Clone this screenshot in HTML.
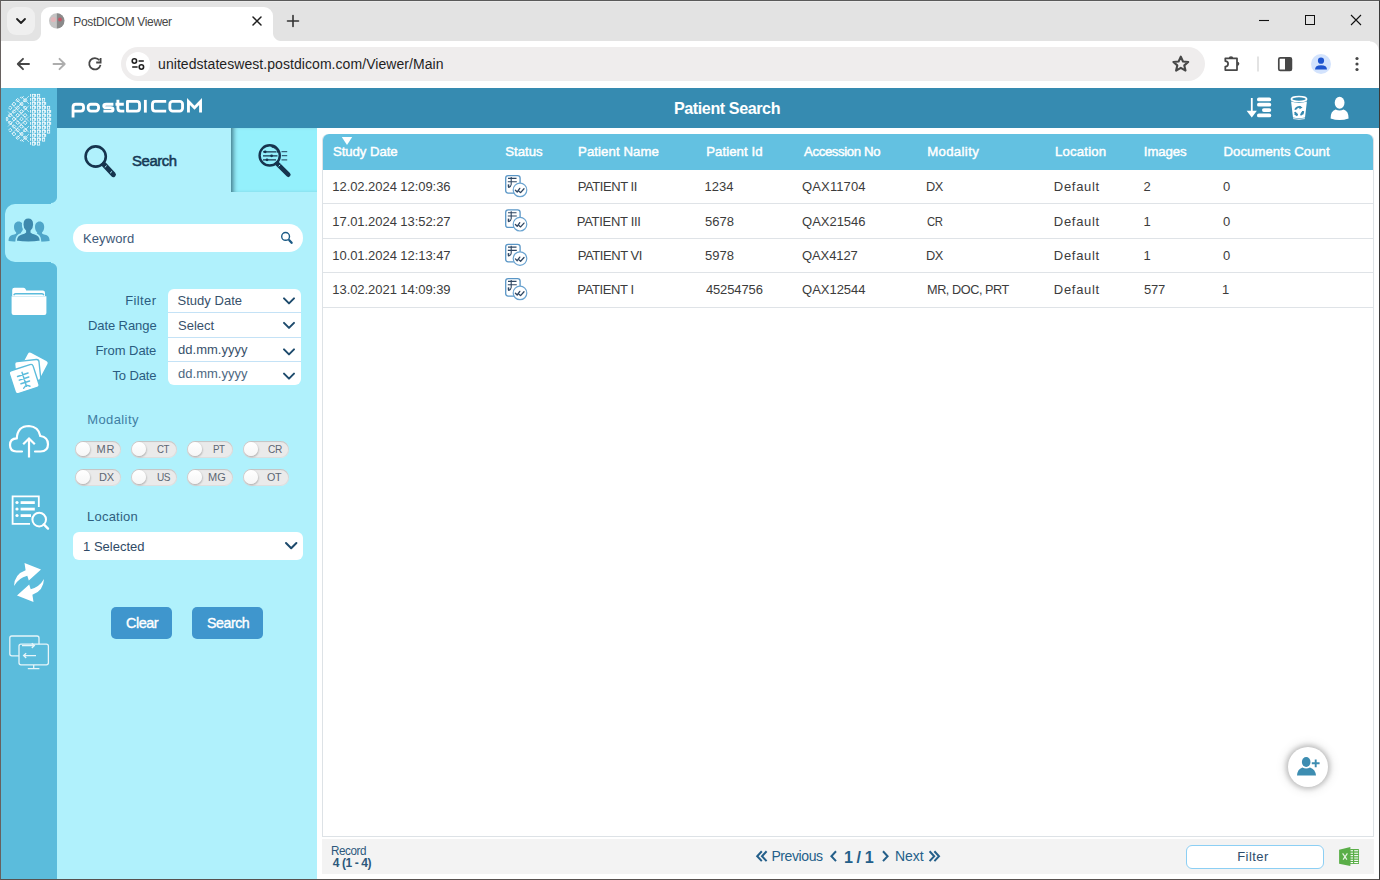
<!DOCTYPE html>
<html><head><meta charset="utf-8">
<title>PostDICOM Viewer</title>
<style>
*{box-sizing:border-box;margin:0;padding:0}
html,body{width:1380px;height:880px;overflow:hidden;background:#fff;font-family:"Liberation Sans",sans-serif}
body{position:relative}
.a{position:absolute}
.t{position:absolute;white-space:nowrap}
svg{position:absolute;overflow:visible}
</style></head><body>
<!-- ============ CHROME ============ -->
<div class="a" style="left:0;top:0;width:1380px;height:41px;background:#e3e3e3"></div>
<div class="a" style="left:7px;top:7px;width:28px;height:28px;border-radius:9px;background:#efefef"></div>
<!-- active tab with flares -->
<div class="a" style="left:41px;top:7px;width:232px;height:34px;background:#fff;border-radius:9px 9px 0 0"></div>
<div class="a" style="left:33px;top:33px;width:8px;height:8px;background:radial-gradient(circle at 0 0,#e3e3e3 7.5px,#fff 8.5px)"></div>
<div class="a" style="left:273px;top:33px;width:8px;height:8px;background:radial-gradient(circle at 100% 0,#e3e3e3 7.5px,#fff 8.5px)"></div>
<div class="a" style="left:0;top:41px;width:1380px;height:47px;background:#fff"></div>
<div class="a" style="left:1370px;top:41px;width:9px;height:9px;background:radial-gradient(circle at 0 100%,#fff 8px,#e3e3e3 9px)"></div>
<div class="a" style="left:121px;top:47px;width:1084px;height:34px;border-radius:17px;background:#efeded"></div>
<div class="a" style="left:126px;top:52px;width:24px;height:24px;border-radius:12px;background:#fff"></div>
<svg width="1380" height="88" style="left:0;top:0">
  <!-- tab search chevron -->
  <path d="M17 19 L21 23 L25 19" fill="none" stroke="#1f1f1f" stroke-width="1.8" stroke-linecap="round" stroke-linejoin="round"/>
  <!-- favicon -->
  <circle cx="56.6" cy="20.8" r="7.6" fill="#c4c4c4"/>
  <path d="M56.9 13.2 A7.6 7.6 0 0 1 56.9 28.4 Z" fill="#8a8a8a"/>
  <circle cx="53.3" cy="19.5" r="2.6" fill="#eab0b6" opacity=".75"/>
  <circle cx="60" cy="19.5" r="1.9" fill="#c85060" opacity=".9"/>
  <!-- tab close -->
  <path d="M253 17 L261 25 M261 17 L253 25" stroke="#1f1f1f" stroke-width="1.5" stroke-linecap="round"/>
  <!-- new tab plus -->
  <path d="M293 15.5 V26.5 M287.5 21 H298.5" stroke="#333" stroke-width="1.6" stroke-linecap="round"/>
  <!-- window controls -->
  <path d="M1259 20.5 H1269" stroke="#111" stroke-width="1.1"/>
  <rect x="1305.5" y="15.5" width="9" height="9" fill="none" stroke="#111" stroke-width="1"/>
  <path d="M1351 15 L1361 25 M1361 15 L1351 25" stroke="#111" stroke-width="1.1"/>
  <!-- back -->
  <path d="M29 64 H18 M23 58.8 L17.8 64 L23 69.2" fill="none" stroke="#474747" stroke-width="1.9" stroke-linecap="round" stroke-linejoin="round"/>
  <!-- forward -->
  <path d="M53.5 64 H64.5 M59.5 58.8 L64.7 64 L59.5 69.2" fill="none" stroke="#adadad" stroke-width="1.9" stroke-linecap="round" stroke-linejoin="round"/>
  <!-- reload -->
  <path d="M100.5 64.9 A5.7 5.7 0 1 1 99.4 60.2" fill="none" stroke="#474747" stroke-width="1.8"/>
  <path d="M96.2 62.5 H100.6 V58" fill="none" stroke="#474747" stroke-width="1.8"/>
  <!-- site info -->
  <circle cx="134.4" cy="61" r="2.2" fill="none" stroke="#1f1f1f" stroke-width="1.6"/>
  <path d="M138.6 61 H143.8 M132.2 67 H137.6" stroke="#1f1f1f" stroke-width="1.7"/>
  <circle cx="141.4" cy="67" r="2.2" fill="none" stroke="#1f1f1f" stroke-width="1.6"/>
  <!-- star -->
  <path d="M1180.8 56.7 L1183 61.5 L1188.2 62 L1184.3 65.4 L1185.5 70.6 L1180.8 67.9 L1176.1 70.6 L1177.3 65.4 L1173.4 62 L1178.6 61.5 Z" fill="none" stroke="#474747" stroke-width="2.1" stroke-linejoin="round"/>
  <!-- extensions -->
  <path d="M1225.3 58.3 H1237 V70 H1225.3 V66.6 A2.8 2.8 0 0 0 1225.3 61 Z" fill="none" stroke="#474747" stroke-width="1.75" stroke-linejoin="round"/>
  <path d="M1228.7 58.6 A2.3 2.3 0 0 1 1233.3 58.6 Z" fill="#474747"/>
  <path d="M1237.2 61.7 A2.15 2.15 0 0 1 1237.2 66 Z" fill="#474747"/>
  <path d="M1258 56.5 V71.5" stroke="#c7c7c7" stroke-width="1"/>
  <!-- side panel -->
  <rect x="1278.8" y="57.8" width="12.6" height="12.6" rx="1.5" fill="none" stroke="#474747" stroke-width="1.7"/>
  <rect x="1285" y="57.8" width="6.4" height="12.6" fill="#474747"/>
  <!-- profile -->
  <circle cx="1321" cy="64" r="10" fill="#d3e3fd"/>
  <circle cx="1321" cy="60.7" r="3.1" fill="#1f55cf"/>
  <path d="M1315 69.5 Q1315 65.2 1321 65.2 Q1327 65.2 1327 69.5 Z" fill="#1f55cf"/>
  <!-- menu -->
  <circle cx="1357" cy="58.5" r="1.6" fill="#474747"/>
  <circle cx="1357" cy="64" r="1.6" fill="#474747"/>
  <circle cx="1357" cy="69.5" r="1.6" fill="#474747"/>
</svg>

<!-- ============ APP ============ -->
<div class="a" style="left:0;top:88px;width:57px;height:792px;background:#5bbcdc"></div>
<div class="a" style="left:57px;top:88px;width:1323px;height:40px;background:#368bb1"></div>
<div class="a" style="left:57px;top:128px;width:260px;height:752px;background:#b0f1fc"></div>
<!-- active sidebar item -->
<div class="a" style="left:5px;top:204px;width:52px;height:58px;background:#b0f1fc;border-radius:10px 0 0 10px"></div>
<div class="a" style="left:51px;top:197px;width:6px;height:7px;background:radial-gradient(circle at 0 0,#5bbcdc 5.5px,#b0f1fc 6.5px)"></div>
<div class="a" style="left:51px;top:262px;width:6px;height:7px;background:radial-gradient(circle at 0 100%,#5bbcdc 5.5px,#b0f1fc 6.5px)"></div>
<!-- filter tab -->
<div class="a" style="left:231px;top:128px;width:86px;height:64px;background:#94f0fc;box-shadow:inset 5px 0 5px -3px rgba(0,30,50,.6)"></div>
<!-- main white -->
<div class="a" style="left:317px;top:128px;width:1063px;height:752px;background:#fff"></div>
<!-- table -->
<div class="a" style="left:322px;top:134px;width:1052px;height:703px;border:1px solid #dde2e6;border-top:none;border-radius:6px 6px 0 0"></div>
<div class="a" style="left:323px;top:134px;width:1050px;height:36px;background:#63c1e1;border-radius:6px 6px 0 0"></div>
<div class="a" style="left:323px;top:203px;width:1050px;height:1px;background:#dfe3e7"></div>
<div class="a" style="left:323px;top:238px;width:1050px;height:1px;background:#dfe3e7"></div>
<div class="a" style="left:323px;top:272px;width:1050px;height:1px;background:#dfe3e7"></div>
<div class="a" style="left:323px;top:307px;width:1050px;height:1px;background:#dfe3e7"></div>
<!-- footer -->
<div class="a" style="left:322px;top:839px;width:1052px;height:35px;background:#f3f3f3"></div>

<!-- brain logo -->
<svg width="57" height="56" style="left:0;top:88px">
 <defs><clipPath id="bcl2"><ellipse cx="29" cy="31" rx="23.2" ry="24"/></clipPath></defs>
 <g transform="translate(0,-88)">
 <g clip-path="url(#bcl2)" transform="translate(0,88)"><g transform="translate(0,-88)">
  <path d="M6 119 L29 96 M6 119 L29 142 M8 111.5 L29 132.5 M8 126.5 L29 105.5 M11.5 104 L29 121.5 M11.5 134 L29 116.5 M16 99 L29 112 M16 139 L29 126 M21.5 96.5 L29 104 M21.5 141.5 L29 134" stroke="#fff" stroke-width="0.7" opacity=".85"/>
  <rect x="5.2" y="117.7" width="2.6" height="2.6" transform="rotate(45 6.5 119.0)" fill="none" stroke="#fff" stroke-width="0.8"/>
<rect x="8.9" y="106.5" width="2.6" height="2.6" transform="rotate(45 10.2 107.8)" fill="none" stroke="#fff" stroke-width="0.8"/>
<rect x="8.9" y="114.0" width="2.6" height="2.6" transform="rotate(45 10.2 115.2)" fill="none" stroke="#fff" stroke-width="0.8"/>
<rect x="8.9" y="121.5" width="2.6" height="2.6" transform="rotate(45 10.2 122.8)" fill="none" stroke="#fff" stroke-width="0.8"/>
<rect x="8.9" y="128.9" width="2.6" height="2.6" transform="rotate(45 10.2 130.2)" fill="none" stroke="#fff" stroke-width="0.8"/>
<rect x="12.7" y="102.7" width="2.6" height="2.6" transform="rotate(45 14.0 104.0)" fill="none" stroke="#fff" stroke-width="0.8"/>
<rect x="12.7" y="110.2" width="2.6" height="2.6" transform="rotate(45 14.0 111.5)" fill="none" stroke="#fff" stroke-width="0.8"/>
<rect x="12.7" y="117.7" width="2.6" height="2.6" transform="rotate(45 14.0 119.0)" fill="none" stroke="#fff" stroke-width="0.8"/>
<rect x="12.7" y="125.2" width="2.6" height="2.6" transform="rotate(45 14.0 126.5)" fill="none" stroke="#fff" stroke-width="0.8"/>
<rect x="12.7" y="132.7" width="2.6" height="2.6" transform="rotate(45 14.0 134.0)" fill="none" stroke="#fff" stroke-width="0.8"/>
<rect x="16.4" y="99.0" width="2.6" height="2.6" transform="rotate(45 17.8 100.2)" fill="none" stroke="#fff" stroke-width="0.8"/>
<rect x="16.4" y="106.5" width="2.6" height="2.6" transform="rotate(45 17.8 107.8)" fill="none" stroke="#fff" stroke-width="0.8"/>
<rect x="16.4" y="114.0" width="2.6" height="2.6" transform="rotate(45 17.8 115.2)" fill="none" stroke="#fff" stroke-width="0.8"/>
<rect x="16.4" y="121.5" width="2.6" height="2.6" transform="rotate(45 17.8 122.8)" fill="none" stroke="#fff" stroke-width="0.8"/>
<rect x="16.4" y="128.9" width="2.6" height="2.6" transform="rotate(45 17.8 130.2)" fill="none" stroke="#fff" stroke-width="0.8"/>
<rect x="16.4" y="136.4" width="2.6" height="2.6" transform="rotate(45 17.8 137.8)" fill="none" stroke="#fff" stroke-width="0.8"/>
<rect x="20.2" y="95.2" width="2.6" height="2.6" transform="rotate(45 21.5 96.5)" fill="none" stroke="#fff" stroke-width="0.8"/>
<rect x="20.2" y="102.7" width="2.6" height="2.6" transform="rotate(45 21.5 104.0)" fill="none" stroke="#fff" stroke-width="0.8"/>
<rect x="20.2" y="110.2" width="2.6" height="2.6" transform="rotate(45 21.5 111.5)" fill="none" stroke="#fff" stroke-width="0.8"/>
<rect x="20.2" y="117.7" width="2.6" height="2.6" transform="rotate(45 21.5 119.0)" fill="none" stroke="#fff" stroke-width="0.8"/>
<rect x="20.2" y="125.2" width="2.6" height="2.6" transform="rotate(45 21.5 126.5)" fill="none" stroke="#fff" stroke-width="0.8"/>
<rect x="20.2" y="132.7" width="2.6" height="2.6" transform="rotate(45 21.5 134.0)" fill="none" stroke="#fff" stroke-width="0.8"/>
<rect x="20.2" y="140.2" width="2.6" height="2.6" transform="rotate(45 21.5 141.5)" fill="none" stroke="#fff" stroke-width="0.8"/>
<rect x="23.9" y="99.0" width="2.6" height="2.6" transform="rotate(45 25.2 100.2)" fill="none" stroke="#fff" stroke-width="0.8"/>
<rect x="23.9" y="106.5" width="2.6" height="2.6" transform="rotate(45 25.2 107.8)" fill="none" stroke="#fff" stroke-width="0.8"/>
<rect x="23.9" y="114.0" width="2.6" height="2.6" transform="rotate(45 25.2 115.2)" fill="none" stroke="#fff" stroke-width="0.8"/>
<rect x="23.9" y="121.5" width="2.6" height="2.6" transform="rotate(45 25.2 122.8)" fill="none" stroke="#fff" stroke-width="0.8"/>
<rect x="23.9" y="128.9" width="2.6" height="2.6" transform="rotate(45 25.2 130.2)" fill="none" stroke="#fff" stroke-width="0.8"/>
<rect x="23.9" y="136.4" width="2.6" height="2.6" transform="rotate(45 25.2 137.8)" fill="none" stroke="#fff" stroke-width="0.8"/>
 </g></g>
 <g fill="#fff">
 <rect x="30.2" y="94.0" width="0.9" height="2.8"/>
<rect x="32.5" y="94.3" width="2.2" height="2.8" fill="none" stroke="#fff" stroke-width="0.75"/>
<rect x="35.2" y="94.0" width="0.9" height="2.8"/>
<rect x="37.5" y="94.3" width="2.2" height="2.8" fill="none" stroke="#fff" stroke-width="0.75"/>
<rect x="30.2" y="98.0" width="0.9" height="2.8"/>
<rect x="32.5" y="98.3" width="2.2" height="2.8" fill="none" stroke="#fff" stroke-width="0.75"/>
<rect x="35.2" y="98.0" width="0.9" height="2.8"/>
<rect x="37.5" y="98.3" width="2.2" height="2.8" fill="none" stroke="#fff" stroke-width="0.75"/>
<rect x="40.2" y="98.0" width="0.9" height="2.8"/>
<rect x="42.5" y="98.3" width="2.2" height="2.8" fill="none" stroke="#fff" stroke-width="0.75"/>
<rect x="30.2" y="102.0" width="0.9" height="2.8"/>
<rect x="32.5" y="102.3" width="2.2" height="2.8" fill="none" stroke="#fff" stroke-width="0.75"/>
<rect x="35.2" y="102.0" width="0.9" height="2.8"/>
<rect x="37.5" y="102.3" width="2.2" height="2.8" fill="none" stroke="#fff" stroke-width="0.75"/>
<rect x="40.2" y="102.0" width="0.9" height="2.8"/>
<rect x="42.5" y="102.3" width="2.2" height="2.8" fill="none" stroke="#fff" stroke-width="0.75"/>
<rect x="45.2" y="102.0" width="0.9" height="2.8"/>
<rect x="30.2" y="106.0" width="0.9" height="2.8"/>
<rect x="32.5" y="106.3" width="2.2" height="2.8" fill="none" stroke="#fff" stroke-width="0.75"/>
<rect x="35.2" y="106.0" width="0.9" height="2.8"/>
<rect x="37.5" y="106.3" width="2.2" height="2.8" fill="none" stroke="#fff" stroke-width="0.75"/>
<rect x="40.2" y="106.0" width="0.9" height="2.8"/>
<rect x="42.5" y="106.3" width="2.2" height="2.8" fill="none" stroke="#fff" stroke-width="0.75"/>
<rect x="45.2" y="106.0" width="0.9" height="2.8"/>
<rect x="47.5" y="106.3" width="2.2" height="2.8" fill="none" stroke="#fff" stroke-width="0.75"/>
<rect x="30.2" y="110.0" width="0.9" height="2.8"/>
<rect x="32.5" y="110.3" width="2.2" height="2.8" fill="none" stroke="#fff" stroke-width="0.75"/>
<rect x="35.2" y="110.0" width="0.9" height="2.8"/>
<rect x="37.5" y="110.3" width="2.2" height="2.8" fill="none" stroke="#fff" stroke-width="0.75"/>
<rect x="40.2" y="110.0" width="0.9" height="2.8"/>
<rect x="42.5" y="110.3" width="2.2" height="2.8" fill="none" stroke="#fff" stroke-width="0.75"/>
<rect x="45.2" y="110.0" width="0.9" height="2.8"/>
<rect x="47.5" y="110.3" width="2.2" height="2.8" fill="none" stroke="#fff" stroke-width="0.75"/>
<rect x="50.2" y="110.0" width="0.9" height="2.8"/>
<rect x="30.2" y="114.0" width="0.9" height="2.8"/>
<rect x="32.5" y="114.3" width="2.2" height="2.8" fill="none" stroke="#fff" stroke-width="0.75"/>
<rect x="35.2" y="114.0" width="0.9" height="2.8"/>
<rect x="37.5" y="114.3" width="2.2" height="2.8" fill="none" stroke="#fff" stroke-width="0.75"/>
<rect x="40.2" y="114.0" width="0.9" height="2.8"/>
<rect x="42.5" y="114.3" width="2.2" height="2.8" fill="none" stroke="#fff" stroke-width="0.75"/>
<rect x="45.2" y="114.0" width="0.9" height="2.8"/>
<rect x="47.5" y="114.3" width="2.2" height="2.8" fill="none" stroke="#fff" stroke-width="0.75"/>
<rect x="50.2" y="114.0" width="0.9" height="2.8"/>
<rect x="30.2" y="118.0" width="0.9" height="2.8"/>
<rect x="32.5" y="118.3" width="2.2" height="2.8" fill="none" stroke="#fff" stroke-width="0.75"/>
<rect x="35.2" y="118.0" width="0.9" height="2.8"/>
<rect x="37.5" y="118.3" width="2.2" height="2.8" fill="none" stroke="#fff" stroke-width="0.75"/>
<rect x="40.2" y="118.0" width="0.9" height="2.8"/>
<rect x="42.5" y="118.3" width="2.2" height="2.8" fill="none" stroke="#fff" stroke-width="0.75"/>
<rect x="45.2" y="118.0" width="0.9" height="2.8"/>
<rect x="47.5" y="118.3" width="2.2" height="2.8" fill="none" stroke="#fff" stroke-width="0.75"/>
<rect x="50.2" y="118.0" width="0.9" height="2.8"/>
<rect x="30.2" y="122.0" width="0.9" height="2.8"/>
<rect x="32.5" y="122.3" width="2.2" height="2.8" fill="none" stroke="#fff" stroke-width="0.75"/>
<rect x="35.2" y="122.0" width="0.9" height="2.8"/>
<rect x="37.5" y="122.3" width="2.2" height="2.8" fill="none" stroke="#fff" stroke-width="0.75"/>
<rect x="40.2" y="122.0" width="0.9" height="2.8"/>
<rect x="42.5" y="122.3" width="2.2" height="2.8" fill="none" stroke="#fff" stroke-width="0.75"/>
<rect x="45.2" y="122.0" width="0.9" height="2.8"/>
<rect x="47.5" y="122.3" width="2.2" height="2.8" fill="none" stroke="#fff" stroke-width="0.75"/>
<rect x="50.2" y="122.0" width="0.9" height="2.8"/>
<rect x="30.2" y="126.0" width="0.9" height="2.8"/>
<rect x="32.5" y="126.3" width="2.2" height="2.8" fill="none" stroke="#fff" stroke-width="0.75"/>
<rect x="35.2" y="126.0" width="0.9" height="2.8"/>
<rect x="37.5" y="126.3" width="2.2" height="2.8" fill="none" stroke="#fff" stroke-width="0.75"/>
<rect x="40.2" y="126.0" width="0.9" height="2.8"/>
<rect x="42.5" y="126.3" width="2.2" height="2.8" fill="none" stroke="#fff" stroke-width="0.75"/>
<rect x="45.2" y="126.0" width="0.9" height="2.8"/>
<rect x="47.5" y="126.3" width="2.2" height="2.8" fill="none" stroke="#fff" stroke-width="0.75"/>
<rect x="30.2" y="130.0" width="0.9" height="2.8"/>
<rect x="32.5" y="130.3" width="2.2" height="2.8" fill="none" stroke="#fff" stroke-width="0.75"/>
<rect x="35.2" y="130.0" width="0.9" height="2.8"/>
<rect x="37.5" y="130.3" width="2.2" height="2.8" fill="none" stroke="#fff" stroke-width="0.75"/>
<rect x="40.2" y="130.0" width="0.9" height="2.8"/>
<rect x="42.5" y="130.3" width="2.2" height="2.8" fill="none" stroke="#fff" stroke-width="0.75"/>
<rect x="45.2" y="130.0" width="0.9" height="2.8"/>
<rect x="47.5" y="130.3" width="2.2" height="2.8" fill="none" stroke="#fff" stroke-width="0.75"/>
<rect x="30.2" y="134.0" width="0.9" height="2.8"/>
<rect x="32.5" y="134.3" width="2.2" height="2.8" fill="none" stroke="#fff" stroke-width="0.75"/>
<rect x="35.2" y="134.0" width="0.9" height="2.8"/>
<rect x="37.5" y="134.3" width="2.2" height="2.8" fill="none" stroke="#fff" stroke-width="0.75"/>
<rect x="40.2" y="134.0" width="0.9" height="2.8"/>
<rect x="42.5" y="134.3" width="2.2" height="2.8" fill="none" stroke="#fff" stroke-width="0.75"/>
<rect x="45.2" y="134.0" width="0.9" height="2.8"/>
<rect x="30.2" y="138.0" width="0.9" height="2.8"/>
<rect x="32.5" y="138.3" width="2.2" height="2.8" fill="none" stroke="#fff" stroke-width="0.75"/>
<rect x="35.2" y="138.0" width="0.9" height="2.8"/>
<rect x="37.5" y="138.3" width="2.2" height="2.8" fill="none" stroke="#fff" stroke-width="0.75"/>
<rect x="40.2" y="138.0" width="0.9" height="2.8"/>
<rect x="42.5" y="138.3" width="2.2" height="2.8" fill="none" stroke="#fff" stroke-width="0.75"/>
<rect x="30.2" y="142.0" width="0.9" height="2.8"/>
<rect x="32.5" y="142.3" width="2.2" height="2.8" fill="none" stroke="#fff" stroke-width="0.75"/>
<rect x="35.2" y="142.0" width="0.9" height="2.8"/>
<rect x="37.5" y="142.3" width="2.2" height="2.8" fill="none" stroke="#fff" stroke-width="0.75"/>
 </g>
 </g>
</svg>
<!-- postDICOM logo -->
<svg width="140" height="24" style="left:68px;top:96px">
 <g transform="translate(-68,-96)" fill="none" stroke="#fff" stroke-width="2.85" stroke-linejoin="round">
  <path d="M73.05 117.4 V107 Q73.05 104.2 75.85 104.2 H80.75 Q83.55 104.2 83.55 107 V108.35 Q83.55 111.15 80.75 111.15 H73.05"/>
  <rect x="88.15" y="104.2" width="10.4" height="6.95" rx="2.8"/>
  <path d="M113.4 104.2 H106.2 Q103.75 104.2 103.75 105.95 Q103.75 107.65 106.2 107.65 H110.6 Q113.05 107.65 113.05 109.4 Q113.05 111.15 110.6 111.15 H103.4"/>
  <path d="M117.9 99.8 V108.35 Q117.9 111.15 120.7 111.15 H124.3 M115.5 104.2 H123.8"/>
  <path d="M127.45 101.35 V111.15 H136.75 Q139.55 111.15 139.55 108.35 V104.15 Q139.55 101.35 136.75 101.35 Z"/>
  <path d="M145.35 99.9 V112.6"/>
  <path d="M166.2 101.35 H155.25 Q152.45 101.35 152.45 104.15 V108.35 Q152.45 111.15 155.25 111.15 H166.2"/>
  <rect x="169.85" y="101.35" width="12.7" height="9.8" rx="2.8"/>
  <path d="M188.45 112.6 V101.6 L194.5 107.8 L200.55 101.6 V112.6" stroke-linejoin="miter"/>
 </g>
</svg>
<!-- header icons -->
<svg width="130" height="40" style="left:1236px;top:88px">
 <g transform="translate(-1236,-88)" fill="#fff">
  <rect x="1250.9" y="98" width="1.8" height="15"/>
  <path d="M1246.6 110.8 H1256.9 L1251.8 117.4 Z"/>
  <rect x="1257" y="97.6" width="14.2" height="3.7" rx="1.85"/>
  <rect x="1257" y="102.8" width="14.2" height="3.7" rx="1.85"/>
  <rect x="1262" y="108.2" width="9.2" height="3.7" rx="1.85"/>
  <rect x="1257" y="113.6" width="14.2" height="3.7" rx="1.85"/>
  <path d="M1291.1 101.6 Q1299 104.4 1306.9 101.6 L1305 117.6 Q1299 119 1293 117.6 Z" fill="#fff"/>
  <ellipse cx="1299" cy="99" rx="7.6" ry="2.5" fill="#368bb1" stroke="#fff" stroke-width="1.7"/>
  <path d="M1293.2 118.6 Q1299 120 1304.8 118.6" fill="none" stroke="#fff" stroke-width="0.9"/>
  <g fill="none" stroke="#368bb1" stroke-width="1.9">
   <path d="M1295.2 109.8 A4.1 4.1 0 0 1 1300.8 107.3"/>
   <path d="M1303 111 A4.1 4.1 0 0 1 1300.4 114.9"/>
   <path d="M1297.8 115 A4.1 4.1 0 0 1 1295 112"/>
  </g>
  <path d="M1299.4 105.8 L1302.6 107.6 L1299.4 109.2 Z M1304.2 111.2 L1303.2 114.8 L1301 112.2 Z M1296.8 116.2 L1293.8 114 L1297.2 112.8 Z" fill="#368bb1"/>
  <ellipse cx="1339.6" cy="102.8" rx="4.9" ry="6"/>
  <path d="M1330.6 118.6 Q1330.4 111 1335.6 109.4 Q1339.6 111.6 1343.6 109.4 Q1348.8 111 1348.6 118.6 Q1339.6 121.6 1330.6 118.6 Z"/>
 </g>
</svg>
<!-- search tab icon -->
<svg width="60" height="50" style="left:80px;top:140px">
 <g transform="translate(-80,-140)">
  <circle cx="95.7" cy="156.5" r="10.1" fill="none" stroke="#16344e" stroke-width="2.6"/>
  <path d="M104 164.5 L113.3 174.6" stroke="#16344e" stroke-width="5.2" stroke-linecap="round"/>
  <path d="M104.8 167.4 L106.7 165.6 M110.1 173.2 L112.1 171.3" stroke="#b0f1fc" stroke-width="1"/>
 </g>
</svg>
<!-- filter tab icon -->
<svg width="40" height="40" style="left:255px;top:140px">
 <g transform="translate(-255,-140)">
  <circle cx="269.7" cy="155.4" r="10.1" fill="none" stroke="#16344e" stroke-width="2.4"/>
  <path d="M277.2 163.6 L288.3 174.7" stroke="#16344e" stroke-width="4.6" stroke-linecap="round"/>
  <path d="M278.6 166.4 L280.2 164.8" stroke="#94f0fc" stroke-width="1"/>
  <path d="M263 151.8 H276.5 M263 155.8 H277.5 M263 159.8 H276" stroke="#16344e" stroke-width="1.2"/>
  <circle cx="265.2" cy="151.8" r="1.4" fill="#16344e"/><circle cx="271.6" cy="155.8" r="1.4" fill="#16344e"/><circle cx="267" cy="159.8" r="1.4" fill="#16344e"/>
  <path d="M271.5 147 Q277 148 278 153" fill="none" stroke="#16344e" stroke-width="1"/>
  <path d="M281.5 151.6 H287.2 M281.8 155.7 H287.2 M281.5 159.8 H287.2" stroke="#16344e" stroke-width="1.3" opacity=".75"/>
 </g>
</svg>
<!-- sidebar icons -->
<svg width="57" height="470" style="left:0;top:200px">
 <g transform="translate(0,-200)">
  <!-- people -->
  <defs>
   <path id="person" d="M0 -13.4 C3.6 -13.4 5.6 -10.6 5.6 -6.8 C5.6 -3.6 4.4 -1.6 3 -0.4 L3 1 C3.8 1.8 5 2.2 6.6 2.6 C10.6 3.6 12.2 5.4 12.2 10.2 Q0 12 -12.2 10.2 C-12.2 5.4 -10.6 3.6 -6.6 2.6 C-5 2.2 -3.8 1.8 -3 1 L-3 -0.4 C-4.4 -1.6 -5.6 -3.6 -5.6 -6.8 C-5.6 -10.6 -3.6 -13.4 0 -13.4 Z"/>
  </defs>
  <use href="#person" transform="translate(18.6 232.6) scale(0.82)" fill="#4fa6c9"/>
  <use href="#person" transform="translate(39.6 232.6) scale(0.82)" fill="#4fa6c9"/>
  <use href="#person" transform="translate(28.3 231.2)" fill="#3d89ad" stroke="#b0f1fc" stroke-width="1.6"/>
  <!-- folder -->
  <g fill="#fff">
   <path d="M12.2 290 Q12.2 287.8 14.4 287.8 H23.5 Q25.2 287.8 25.8 289.6 L26.2 290.6 H42.8 Q45 290.6 45 292.8 V296 H12.2 Z"/>
   <path d="M11.6 296.2 H46.4 V313 Q46.4 315 44.4 315 H13.6 Q11.6 315 11.6 313 Z"/>
  </g>
  <path d="M13.8 295.2 Q14.2 293.8 15.6 293.8 H42 Q43.4 293.8 43.8 295.2" fill="none" stroke="#5bbcdc" stroke-width="1.4"/>
  <!-- xray cards -->
  <g transform="rotate(28 34 368)"><rect x="22" y="356" width="22" height="21" rx="2.5" fill="#fff"/></g>
  <g transform="rotate(-6 28 372)"><rect x="15.5" y="360.5" width="24.5" height="21" rx="2.5" fill="#fff" stroke="#5bbcdc" stroke-width="1.4"/></g>
  <g transform="rotate(-18 24.5 380)">
   <rect x="12" y="367" width="25" height="24" rx="2.5" fill="#fff" stroke="#5bbcdc" stroke-width="1.4"/>
   <path d="M24.5 372 V386.5 M19 374.5 H30 M19.5 378.5 H29.5 M20 382.5 H29 M21.2 387.6 Q24.5 384.5 27.8 387.6" fill="none" stroke="#5bbcdc" stroke-width="1.5" stroke-linecap="round"/>
  </g>
  <!-- cloud upload -->
  <path d="M22 451.5 H16.5 Q10 451.5 10 445 Q10 438.5 16.8 438.3 Q17.5 426 29 426 Q38.5 426.5 40.3 436 Q48 437 48 444.3 Q48 451.5 40.5 451.5 H35" fill="none" stroke="#fff" stroke-width="2.2" stroke-linecap="round"/>
  <path d="M29 457.5 V438.5 M23.2 444.3 L29 438.5 L34.8 444.3" fill="none" stroke="#fff" stroke-width="2.2"/>
  <!-- list search -->
  <path d="M30 523.8 H12.6 V496.4 H38.8 V507" fill="none" stroke="#fff" stroke-width="1.8"/>
  <g fill="#fff"><circle cx="17" cy="502.5" r="1.6"/><circle cx="17" cy="509" r="1.6"/><circle cx="17" cy="515.5" r="1.6"/>
   <rect x="20.6" y="501.2" width="14.2" height="2.8"/><rect x="20.6" y="507.7" width="14.2" height="2.8"/><rect x="20.6" y="514.2" width="10.4" height="2.8"/></g>
  <circle cx="39.2" cy="519.6" r="6.8" fill="#5bbcdc" stroke="#fff" stroke-width="2"/>
  <path d="M43.8 524.4 L48 528.6" stroke="#fff" stroke-width="2.4" stroke-linecap="round"/>
  <!-- sync -->
  <g fill="#fff">
   <path d="M14 586 Q14.5 574 25.6 570.2 L24.5 563 L41 569.6 L28.8 580.6 L27.3 575.8 Q18.5 578 14 586 Z"/>
   <path d="M44 579 Q43.5 591 32.4 594.8 L33.5 602 L17 595.4 L29.2 584.4 L30.7 589.2 Q39.5 587 44 579 Z"/>
  </g>
  <!-- monitors -->
  <g fill="none" stroke="#fff" stroke-width="1.3" opacity=".85">
   <rect x="9.8" y="636" width="29.2" height="19.8" rx="2"/>
   <rect x="19" y="644.2" width="29.4" height="20.6" rx="2" fill="#5bbcdc"/>
   <path d="M33.7 665 V668.3 M27.8 668.6 H39.4"/>
   <path d="M22 645.6 H34.4 M31.8 643.2 L34.4 645.6 L31.8 648" />
   <path d="M36 655.6 H23.6 M26.2 653.2 L23.6 655.6 L26.2 658"/>
  </g>
 </g>
</svg>
<!-- keyword input -->
<div class="a" style="left:73px;top:224px;width:230px;height:28px;border-radius:14px;background:#fff"></div>
<svg width="20" height="20" style="left:278px;top:228px">
 <g transform="translate(-278,-228)">
  <circle cx="285.6" cy="236.4" r="3.9" fill="none" stroke="#1b5a85" stroke-width="1.4"/>
  <path d="M289.3 240.3 L291.6 242.8" stroke="#1b5a85" stroke-width="2.3" stroke-linecap="round"/>
 </g>
</svg>
<!-- selects group -->
<div class="a" style="left:168px;top:289px;width:133px;height:96px;border-radius:6px;background:#fff"></div>
<div class="a" style="left:168px;top:312px;width:133px;height:1px;background:#c4e2f6"></div>
<div class="a" style="left:168px;top:337px;width:133px;height:1px;background:#c4e2f6"></div>
<div class="a" style="left:168px;top:361px;width:133px;height:1px;background:#c4e2f6"></div>
<svg width="20" height="100" style="left:280px;top:290px">
 <g transform="translate(-280,-290)" fill="none" stroke="#1d4a6c" stroke-width="2" stroke-linecap="round" stroke-linejoin="round">
  <path d="M284 298.4 L289 303.4 L294 298.4"/>
  <path d="M284 322.9 L289 327.9 L294 322.9"/>
  <path d="M284 349.4 L289 354.4 L294 349.4"/>
  <path d="M284 373.6 L289 378.6 L294 373.6"/>
  <path d="M286 543 L291.2 548.2 L296.4 543"/>
 </g>
</svg>
<!-- location select -->
<div class="a" style="left:73px;top:532px;width:230px;height:28px;border-radius:6px;background:#fff"></div>
<svg width="20" height="20" style="left:280px;top:536px">
 <g transform="translate(-280,-536)" fill="none" stroke="#1d4a6c" stroke-width="2" stroke-linecap="round" stroke-linejoin="round">
  <path d="M286 543 L291.2 548.2 L296.4 543"/>
 </g>
</svg>
<!-- toggles -->
<div class="a" style="left:75px;top:441px;width:46px;height:17px;border-radius:9px;background:#eaeaea;box-shadow:inset 0 1px 1px rgba(0,0,0,.12), inset 0 0 0 1px #dedede"></div>
<div class="a" style="left:131px;top:441px;width:46px;height:17px;border-radius:9px;background:#eaeaea;box-shadow:inset 0 1px 1px rgba(0,0,0,.12), inset 0 0 0 1px #dedede"></div>
<div class="a" style="left:187px;top:441px;width:46px;height:17px;border-radius:9px;background:#eaeaea;box-shadow:inset 0 1px 1px rgba(0,0,0,.12), inset 0 0 0 1px #dedede"></div>
<div class="a" style="left:243px;top:441px;width:46px;height:17px;border-radius:9px;background:#eaeaea;box-shadow:inset 0 1px 1px rgba(0,0,0,.12), inset 0 0 0 1px #dedede"></div>
<div class="a" style="left:75px;top:469px;width:46px;height:17px;border-radius:9px;background:#eaeaea;box-shadow:inset 0 1px 1px rgba(0,0,0,.12), inset 0 0 0 1px #dedede"></div>
<div class="a" style="left:131px;top:469px;width:46px;height:17px;border-radius:9px;background:#eaeaea;box-shadow:inset 0 1px 1px rgba(0,0,0,.12), inset 0 0 0 1px #dedede"></div>
<div class="a" style="left:187px;top:469px;width:46px;height:17px;border-radius:9px;background:#eaeaea;box-shadow:inset 0 1px 1px rgba(0,0,0,.12), inset 0 0 0 1px #dedede"></div>
<div class="a" style="left:243px;top:469px;width:46px;height:17px;border-radius:9px;background:#eaeaea;box-shadow:inset 0 1px 1px rgba(0,0,0,.12), inset 0 0 0 1px #dedede"></div>
<div class="a" style="left:75.8px;top:442px;width:14px;height:14px;border-radius:7px;background:linear-gradient(#fff,#f6f6f6);box-shadow:0.5px 1px 2px rgba(0,0,0,.28)"></div>
<div class="a" style="left:131.8px;top:442px;width:14px;height:14px;border-radius:7px;background:linear-gradient(#fff,#f6f6f6);box-shadow:0.5px 1px 2px rgba(0,0,0,.28)"></div>
<div class="a" style="left:187.8px;top:442px;width:14px;height:14px;border-radius:7px;background:linear-gradient(#fff,#f6f6f6);box-shadow:0.5px 1px 2px rgba(0,0,0,.28)"></div>
<div class="a" style="left:243.8px;top:442px;width:14px;height:14px;border-radius:7px;background:linear-gradient(#fff,#f6f6f6);box-shadow:0.5px 1px 2px rgba(0,0,0,.28)"></div>
<div class="a" style="left:75.8px;top:470px;width:14px;height:14px;border-radius:7px;background:linear-gradient(#fff,#f6f6f6);box-shadow:0.5px 1px 2px rgba(0,0,0,.28)"></div>
<div class="a" style="left:131.8px;top:470px;width:14px;height:14px;border-radius:7px;background:linear-gradient(#fff,#f6f6f6);box-shadow:0.5px 1px 2px rgba(0,0,0,.28)"></div>
<div class="a" style="left:187.8px;top:470px;width:14px;height:14px;border-radius:7px;background:linear-gradient(#fff,#f6f6f6);box-shadow:0.5px 1px 2px rgba(0,0,0,.28)"></div>
<div class="a" style="left:243.8px;top:470px;width:14px;height:14px;border-radius:7px;background:linear-gradient(#fff,#f6f6f6);box-shadow:0.5px 1px 2px rgba(0,0,0,.28)"></div>
<!-- buttons -->
<div class="a" style="left:111px;top:607px;width:61px;height:32px;border-radius:5px;background:#3f96cd"></div>
<div class="a" style="left:192px;top:607px;width:71px;height:32px;border-radius:5px;background:#3f96cd"></div>
<!-- sort triangle -->
<svg width="14" height="12" style="left:340px;top:135px"><path d="M1.8 2 H12.2 L7 10 Z" fill="#fff"/></svg>
<!-- status icons -->
<svg width="30" height="130" style="left:500px;top:172px">
 <defs>
  <g id="st">
   <rect x="5.7" y="3.6" width="14.4" height="17.5" rx="2.5" fill="#fff" stroke="#5a96c6" stroke-width="1.3"/>
   <path d="M8 6.4 H16.5 M7.8 9.7 H16.8 M11.2 5 V12.5 Q11 14.6 8.6 15.4" fill="none" stroke="#2e4662" stroke-width="1.1"/>
   <path d="M8.6 12.4 Q8.3 14.4 8.8 15.6" stroke="#2e4662" stroke-width="1.6" fill="none"/>
   <circle cx="20" cy="17.9" r="6.8" fill="#fff" stroke="#6aa3d0" stroke-width="1.2"/>
   <path d="M15.4 18.2 L17.2 20 L19.8 16.4 M19.2 19.4 L20.6 20.6 L24 16.8" fill="none" stroke="#2e4662" stroke-width="1.3" stroke-linecap="round" stroke-linejoin="round"/>
  </g>
 </defs>
 <use href="#st" x="0" y="0"/>
 <use href="#st" x="0" y="34.3"/>
 <use href="#st" x="0" y="68.7"/>
 <use href="#st" x="0" y="103"/>
</svg>
<!-- FAB -->
<div class="a" style="left:1287.5px;top:747px;width:40px;height:40px;border-radius:20px;background:#fff;box-shadow:0 0 5px 2px rgba(0,0,0,.2), 0 0 12px 2px rgba(0,0,0,.12)"></div>
<svg width="30" height="30" style="left:1292px;top:752px">
 <g transform="translate(-1292,-752)" fill="#3d8db1">
  <ellipse cx="1306.2" cy="762" rx="4.3" ry="4.9"/>
  <path d="M1297 775.6 Q1297.4 769.2 1302.4 767.5 Q1306.2 769.6 1310 767.5 Q1315.4 769.2 1316 775.6 Z"/>
  <path d="M1315.7 759.4 V767.2 M1311.8 763.3 H1319.6" stroke="#3d8db1" stroke-width="1.9"/>
 </g>
</svg>
<!-- footer controls -->
<svg width="200" height="30" style="left:750px;top:842px">
 <g transform="translate(-750,-842)" fill="none" stroke="#245f8a" stroke-width="2" stroke-linejoin="miter">
  <path d="M761.8 851.3 L757.2 856.2 L761.8 861.1 M766.6 851.3 L762 856.2 L766.6 861.1"/>
  <path d="M836 851.3 L831.4 856.2 L836 861.1"/>
  <path d="M883 851.3 L887.6 856.2 L883 861.1"/>
  <path d="M929.6 851.3 L934.2 856.2 L929.6 861.1 M934.4 851.3 L939 856.2 L934.4 861.1"/>
 </g>
</svg>
<div class="a" style="left:1186px;top:845px;width:138px;height:24px;border-radius:6px;background:#fff;border:1px solid #8ccff4"></div>
<svg width="24" height="22" style="left:1338px;top:846px">
 <g transform="translate(-1338,-846)">
  <path d="M1339.1 849.8 L1350.4 847 V866 L1339.1 863.8 Z" fill="#5aae48"/>
  <rect x="1350" y="849" width="9" height="15" rx="0.6" fill="#5aae48"/>
  <g fill="#fff">
   <rect x="1350.6" y="850.2" width="2.4" height="1.1"/><rect x="1354.2" y="850.2" width="4" height="1.1"/>
   <rect x="1350.6" y="852.6" width="2.4" height="1.4" opacity=".75"/><rect x="1354.2" y="852.6" width="4" height="1.4" opacity=".75"/>
   <rect x="1350.6" y="855.1" width="2.4" height="1.1"/><rect x="1354.2" y="855.1" width="4" height="1.1"/>
   <rect x="1350.6" y="857.3" width="2.4" height="1.4" opacity=".75"/><rect x="1354.2" y="857.3" width="4" height="1.4" opacity=".75"/>
   <rect x="1350.6" y="859.8" width="2.4" height="1.1"/><rect x="1354.2" y="859.8" width="4" height="1.1"/>
   <rect x="1350.6" y="862" width="2.4" height="1.1"/><rect x="1354.2" y="862" width="4" height="1.1"/>
  </g>
  <path d="M1342.6 853.4 L1346.9 859.6 M1347.4 853.4 L1343.1 859.6" stroke="#e8f4e4" stroke-width="1.2"/>
 </g>
</svg>

<!-- window border -->
<div class="a" style="left:1px;top:1px;width:1378px;height:1px;background:#ebebeb"></div>
<div class="a" style="left:0;top:0;width:1380px;height:880px;border:1px solid #5a5a5a;border-left-color:#67615f;border-right-color:#3a3a3a;border-bottom-color:#57514f"></div>

<div class="t" id="t_tab" style="left:73.30px;top:11.81px;font-size:12.00px;line-height:20px;color:#474747;font-weight:400;letter-spacing:-0.333px;">PostDICOM Viewer</div>
<div class="t" id="t_url" style="left:158.05px;top:53.81px;font-size:14.00px;line-height:20px;color:#1f1f1f;font-weight:400;letter-spacing:0.061px;">unitedstateswest.postdicom.com/Viewer/Main</div>
<div class="t" id="t_title" style="left:674.05px;top:99.30px;font-size:17.00px;line-height:20px;color:#ffffff;font-weight:700;letter-spacing:-0.450px;;transform:scaleX(0.9487);transform-origin:0 0">Patient Search</div>
<div class="t" id="t_searchtab" style="left:131.60px;top:150.91px;font-size:15.50px;line-height:20px;color:#163a56;font-weight:400;letter-spacing:-0.450px;-webkit-text-stroke:0.55px #163a56;transform:scaleX(0.9626);transform-origin:0 0">Search</div>
<div class="t" id="t_kw" style="left:82.95px;top:229.01px;font-size:13.00px;line-height:20px;color:#3d5878;font-weight:400;letter-spacing:0.117px;">Keyword</div>
<div class="t" id="l1" style="left:125.20px;top:290.81px;font-size:13.00px;line-height:20px;color:#2b5c80;font-weight:400;letter-spacing:0.400px;">Filter</div>
<div class="t" id="l2" style="left:87.95px;top:315.81px;font-size:13.00px;line-height:20px;color:#2b5c80;font-weight:400;letter-spacing:-0.078px;">Date Range</div>
<div class="t" id="l3" style="left:95.45px;top:340.81px;font-size:13.00px;line-height:20px;color:#2b5c80;font-weight:400;letter-spacing:-0.062px;">From Date</div>
<div class="t" id="l4" style="left:112.45px;top:365.51px;font-size:13.00px;line-height:20px;color:#2b5c80;font-weight:400;letter-spacing:-0.117px;">To Date</div>
<div class="t" id="v1" style="left:177.50px;top:290.81px;font-size:13.00px;line-height:20px;color:#38516b;font-weight:400;letter-spacing:0.022px;">Study Date</div>
<div class="t" id="v2" style="left:178.05px;top:315.81px;font-size:13.00px;line-height:20px;color:#38516b;font-weight:400;letter-spacing:-0.020px;">Select</div>
<div class="t" id="v3" style="left:178.00px;top:340.21px;font-size:13.00px;line-height:20px;color:#38516b;font-weight:400;letter-spacing:0.022px;">dd.mm.yyyy</div>
<div class="t" id="v4" style="left:178.00px;top:364.01px;font-size:13.00px;line-height:20px;color:#4d6882;font-weight:400;letter-spacing:0.022px;">dd.mm.yyyy</div>
<div class="t" id="t_mod" style="left:87.20px;top:410.21px;font-size:13.00px;line-height:20px;color:#3f7ea3;font-weight:400;letter-spacing:0.400px;">Modality</div>
<div class="t" id="g0" style="left:96.55px;top:439.21px;font-size:11.00px;line-height:20px;color:#5d6773;font-weight:400;letter-spacing:0.700px;">MR</div>
<div class="t" id="g1" style="left:156.50px;top:439.21px;font-size:11.00px;line-height:20px;color:#5d6773;font-weight:400;letter-spacing:-0.450px;;transform:scaleX(0.8797);transform-origin:0 0">CT</div>
<div class="t" id="g2" style="left:213.20px;top:439.21px;font-size:11.00px;line-height:20px;color:#5d6773;font-weight:400;letter-spacing:-0.450px;;transform:scaleX(0.8856);transform-origin:0 0">PT</div>
<div class="t" id="g3" style="left:268.30px;top:439.21px;font-size:11.00px;line-height:20px;color:#5d6773;font-weight:400;letter-spacing:-0.450px;;transform:scaleX(0.9210);transform-origin:0 0">CR</div>
<div class="t" id="g4" style="left:99.05px;top:467.00px;font-size:11.00px;line-height:20px;color:#5d6773;font-weight:400;letter-spacing:-0.300px;">DX</div>
<div class="t" id="g5" style="left:157.25px;top:467.00px;font-size:11.00px;line-height:20px;color:#5d6773;font-weight:400;letter-spacing:-0.450px;;transform:scaleX(0.9141);transform-origin:0 0">US</div>
<div class="t" id="g6" style="left:207.95px;top:467.00px;font-size:11.00px;line-height:20px;color:#5d6773;font-weight:400;letter-spacing:0.100px;">MG</div>
<div class="t" id="g7" style="left:266.80px;top:467.00px;font-size:11.00px;line-height:20px;color:#5d6773;font-weight:400;letter-spacing:-0.450px;;transform:scaleX(0.9759);transform-origin:0 0">OT</div>
<div class="t" id="t_loc" style="left:87.00px;top:507.21px;font-size:13.00px;line-height:20px;color:#2f5f80;font-weight:400;letter-spacing:0.229px;">Location</div>
<div class="t" id="t_sel" style="left:83.10px;top:537.01px;font-size:13.00px;line-height:20px;color:#2f4a66;font-weight:400;letter-spacing:0.000px;">1 Selected</div>
<div class="t" id="b_clear" style="left:125.80px;top:613.21px;font-size:14.50px;line-height:20px;color:#ffffff;font-weight:400;letter-spacing:-0.450px;-webkit-text-stroke:0.35px #fff;transform:scaleX(0.9940);transform-origin:0 0">Clear</div>
<div class="t" id="b_search" style="left:206.70px;top:613.21px;font-size:14.50px;line-height:20px;color:#ffffff;font-weight:400;letter-spacing:-0.450px;-webkit-text-stroke:0.35px #fff;transform:scaleX(0.9778);transform-origin:0 0">Search</div>
<div class="t" id="h1" style="left:332.95px;top:141.80px;font-size:13.20px;line-height:20px;color:#ffffff;font-weight:400;letter-spacing:-0.056px;-webkit-text-stroke:0.45px #fff">Study Date</div>
<div class="t" id="h2" style="left:505.20px;top:141.80px;font-size:13.20px;line-height:20px;color:#ffffff;font-weight:400;letter-spacing:-0.000px;-webkit-text-stroke:0.45px #fff">Status</div>
<div class="t" id="h3" style="left:578.00px;top:141.80px;font-size:13.20px;line-height:20px;color:#ffffff;font-weight:400;letter-spacing:0.091px;-webkit-text-stroke:0.45px #fff">Patient Name</div>
<div class="t" id="h4" style="left:706.25px;top:141.80px;font-size:13.20px;line-height:20px;color:#ffffff;font-weight:400;letter-spacing:0.056px;-webkit-text-stroke:0.45px #fff">Patient Id</div>
<div class="t" id="h5" style="left:804.05px;top:141.80px;font-size:13.20px;line-height:20px;color:#ffffff;font-weight:400;letter-spacing:-0.373px;-webkit-text-stroke:0.45px #fff">Accession No</div>
<div class="t" id="h6" style="left:927.15px;top:141.80px;font-size:13.20px;line-height:20px;color:#ffffff;font-weight:400;letter-spacing:0.357px;-webkit-text-stroke:0.45px #fff">Modality</div>
<div class="t" id="h7" style="left:1054.95px;top:141.80px;font-size:13.20px;line-height:20px;color:#ffffff;font-weight:400;letter-spacing:0.186px;-webkit-text-stroke:0.45px #fff">Location</div>
<div class="t" id="h8" style="left:1143.80px;top:141.80px;font-size:13.20px;line-height:20px;color:#ffffff;font-weight:400;letter-spacing:-0.080px;-webkit-text-stroke:0.45px #fff">Images</div>
<div class="t" id="h9" style="left:1223.55px;top:141.80px;font-size:13.20px;line-height:20px;color:#ffffff;font-weight:400;letter-spacing:0.036px;-webkit-text-stroke:0.45px #fff">Documents Count</div>
<div class="t" id="r0_0" style="left:332.30px;top:177.40px;font-size:13.00px;line-height:20px;color:#3c3c3c;font-weight:400;letter-spacing:-0.056px;">12.02.2024 12:09:36</div>
<div class="t" id="r0_1" style="left:577.80px;top:177.40px;font-size:13.00px;line-height:20px;color:#3c3c3c;font-weight:400;letter-spacing:-0.444px;">PATIENT II</div>
<div class="t" id="r0_2" style="left:704.40px;top:177.40px;font-size:13.00px;line-height:20px;color:#3c3c3c;font-weight:400;letter-spacing:0.067px;">1234</div>
<div class="t" id="r0_3" style="left:802.10px;top:177.40px;font-size:13.00px;line-height:20px;color:#3c3c3c;font-weight:400;letter-spacing:0.114px;">QAX11704</div>
<div class="t" id="r0_4" style="left:926.45px;top:177.40px;font-size:13.00px;line-height:20px;color:#3c3c3c;font-weight:400;letter-spacing:-0.450px;;transform:scaleX(0.9849);transform-origin:0 0">DX</div>
<div class="t" id="r0_5" style="left:1053.80px;top:177.40px;font-size:13.00px;line-height:20px;color:#3c3c3c;font-weight:400;letter-spacing:0.700px;">Default</div>
<div class="t" id="r0_6" style="left:1143.60px;top:177.40px;font-size:13.00px;line-height:20px;color:#3c3c3c;font-weight:400;letter-spacing:0.000px;">2</div>
<div class="t" id="r0_7" style="left:1223.00px;top:177.40px;font-size:13.00px;line-height:20px;color:#3c3c3c;font-weight:400;letter-spacing:0.000px;">0</div>
<div class="t" id="r1_0" style="left:332.30px;top:211.61px;font-size:13.00px;line-height:20px;color:#3c3c3c;font-weight:400;letter-spacing:-0.056px;">17.01.2024 13:52:27</div>
<div class="t" id="r1_1" style="left:576.80px;top:211.61px;font-size:13.00px;line-height:20px;color:#3c3c3c;font-weight:400;letter-spacing:-0.300px;">PATIENT III</div>
<div class="t" id="r1_2" style="left:704.90px;top:211.61px;font-size:13.00px;line-height:20px;color:#3c3c3c;font-weight:400;letter-spacing:0.067px;">5678</div>
<div class="t" id="r1_3" style="left:802.10px;top:211.61px;font-size:13.00px;line-height:20px;color:#3c3c3c;font-weight:400;letter-spacing:-0.029px;">QAX21546</div>
<div class="t" id="r1_4" style="left:926.95px;top:211.61px;font-size:13.00px;line-height:20px;color:#3c3c3c;font-weight:400;letter-spacing:-0.450px;;transform:scaleX(0.8718);transform-origin:0 0">CR</div>
<div class="t" id="r1_5" style="left:1053.80px;top:211.61px;font-size:13.00px;line-height:20px;color:#3c3c3c;font-weight:400;letter-spacing:0.700px;">Default</div>
<div class="t" id="r1_6" style="left:1143.60px;top:211.61px;font-size:13.00px;line-height:20px;color:#3c3c3c;font-weight:400;letter-spacing:0.000px;">1</div>
<div class="t" id="r1_7" style="left:1223.00px;top:211.61px;font-size:13.00px;line-height:20px;color:#3c3c3c;font-weight:400;letter-spacing:0.000px;">0</div>
<div class="t" id="r2_0" style="left:332.30px;top:246.01px;font-size:13.00px;line-height:20px;color:#3c3c3c;font-weight:400;letter-spacing:-0.056px;">10.01.2024 12:13:47</div>
<div class="t" id="r2_1" style="left:577.80px;top:246.01px;font-size:13.00px;line-height:20px;color:#3c3c3c;font-weight:400;letter-spacing:-0.444px;">PATIENT VI</div>
<div class="t" id="r2_2" style="left:704.90px;top:246.01px;font-size:13.00px;line-height:20px;color:#3c3c3c;font-weight:400;letter-spacing:0.067px;">5978</div>
<div class="t" id="r2_3" style="left:802.00px;top:246.01px;font-size:13.00px;line-height:20px;color:#3c3c3c;font-weight:400;letter-spacing:-0.100px;">QAX4127</div>
<div class="t" id="r2_4" style="left:926.45px;top:246.01px;font-size:13.00px;line-height:20px;color:#3c3c3c;font-weight:400;letter-spacing:-0.450px;;transform:scaleX(0.9849);transform-origin:0 0">DX</div>
<div class="t" id="r2_5" style="left:1053.80px;top:246.01px;font-size:13.00px;line-height:20px;color:#3c3c3c;font-weight:400;letter-spacing:0.700px;">Default</div>
<div class="t" id="r2_6" style="left:1143.60px;top:246.01px;font-size:13.00px;line-height:20px;color:#3c3c3c;font-weight:400;letter-spacing:0.000px;">1</div>
<div class="t" id="r2_7" style="left:1223.00px;top:246.01px;font-size:13.00px;line-height:20px;color:#3c3c3c;font-weight:400;letter-spacing:0.000px;">0</div>
<div class="t" id="r3_0" style="left:332.30px;top:280.41px;font-size:13.00px;line-height:20px;color:#3c3c3c;font-weight:400;letter-spacing:-0.056px;">13.02.2021 14:09:39</div>
<div class="t" id="r3_1" style="left:577.35px;top:280.41px;font-size:13.00px;line-height:20px;color:#3c3c3c;font-weight:400;letter-spacing:-0.412px;">PATIENT I</div>
<div class="t" id="r3_2" style="left:705.90px;top:280.41px;font-size:13.00px;line-height:20px;color:#3c3c3c;font-weight:400;letter-spacing:-0.114px;">45254756</div>
<div class="t" id="r3_3" style="left:802.10px;top:280.41px;font-size:13.00px;line-height:20px;color:#3c3c3c;font-weight:400;letter-spacing:-0.029px;">QAX12544</div>
<div class="t" id="r3_4" style="left:926.50px;top:280.41px;font-size:13.00px;line-height:20px;color:#3c3c3c;font-weight:400;letter-spacing:-0.450px;;transform:scaleX(0.9756);transform-origin:0 0">MR, DOC, PRT</div>
<div class="t" id="r3_5" style="left:1053.80px;top:280.41px;font-size:13.00px;line-height:20px;color:#3c3c3c;font-weight:400;letter-spacing:0.700px;">Default</div>
<div class="t" id="r3_6" style="left:1144.00px;top:280.41px;font-size:13.00px;line-height:20px;color:#3c3c3c;font-weight:400;letter-spacing:-0.200px;">577</div>
<div class="t" id="r3_7" style="left:1222.00px;top:280.41px;font-size:13.00px;line-height:20px;color:#3c3c3c;font-weight:400;letter-spacing:0.000px;">1</div>
<div class="t" id="f_rec" style="left:330.65px;top:841.21px;font-size:12.00px;line-height:20px;color:#2c587c;font-weight:400;letter-spacing:-0.450px;;transform:scaleX(0.9729);transform-origin:0 0">Record</div>
<div class="t" id="f_cnt" style="left:332.80px;top:853.01px;font-size:12.00px;line-height:20px;color:#2c587c;font-weight:700;letter-spacing:-0.400px;">4 (1 - 4)</div>
<div class="t" id="f_prev" style="left:771.45px;top:846.40px;font-size:14.00px;line-height:20px;color:#245f8a;font-weight:400;letter-spacing:-0.414px;">Previous</div>
<div class="t" id="f_pg" style="left:843.75px;top:847.21px;font-size:16.50px;line-height:20px;color:#245f8a;font-weight:700;letter-spacing:-0.450px;;transform:scaleX(0.9768);transform-origin:0 0">1 / 1</div>
<div class="t" id="f_next" style="left:895.05px;top:846.40px;font-size:14.00px;line-height:20px;color:#245f8a;font-weight:400;letter-spacing:-0.100px;">Next</div>
<div class="t" id="f_filter" style="left:1237.20px;top:846.71px;font-size:13.00px;line-height:20px;color:#2d4d6c;font-weight:400;letter-spacing:0.440px;">Filter</div>
</body></html>
